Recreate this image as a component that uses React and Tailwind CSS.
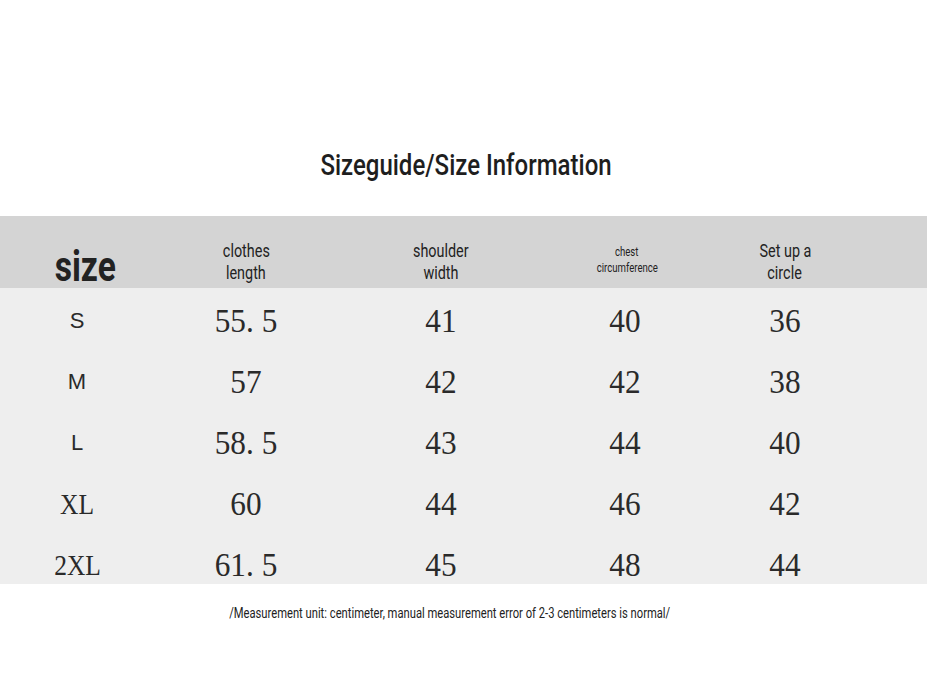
import React from 'react';

const cols = "grid grid-cols-[160px_172px_218px_150px_170px_1fr]";

const rows = [
  { size: 'S', serif: false, vals: ['55. 5', '41', '40', '36'] },
  { size: 'M', serif: false, vals: ['57', '42', '42', '38'] },
  { size: 'L', serif: false, vals: ['58. 5', '43', '44', '40'] },
  { size: 'XL', serif: true, vals: ['60', '44', '46', '42'] },
  { size: '2XL', serif: true, vals: ['61. 5', '45', '48', '44'] },
];

function Head({ lines, small }) {
  return (
    <div className={`flex flex-col items-center text-[#222] ${small ? 'pt-[28px] pl-[4px] text-[12px] leading-[16px]' : 'pt-[24px] text-[18px] leading-[22px]'}`}>
      {lines.map((l) => (
        <span key={l} className="inline-block scale-x-[0.8] whitespace-nowrap">{l}</span>
      ))}
    </div>
  );
}

export default function App() {
  return (
    <div className="h-[696px] w-full bg-white flex flex-col font-['Roboto',sans-serif]">
      {/* Title */}
      <div className="pt-[148px] pl-[6px] h-[216px] text-center">
        <span className="inline-block scale-x-[0.8] text-[30px] leading-[34px] font-medium text-[#1e1e1e] whitespace-nowrap">
          Sizeguide/Size Information
        </span>
      </div>

      {/* Header band */}
      <div className={`${cols} h-[72px] bg-[#d4d4d4]`}>
        <div className="flex justify-center pl-[10px] pt-[31px]">
          <span className="inline-block scale-x-[0.8] text-[42px] leading-[40px] font-bold text-[#222]">size</span>
        </div>
        <Head lines={['clothes', 'length']} />
        <Head lines={['shoulder', 'width']} />
        <Head lines={['chest', 'circumference']} small />
        <Head lines={['Set up a', 'circle']} />
        <div />
      </div>

      {/* Body */}
      <div className="h-[296px] bg-[#eeeeee] flex flex-col pt-[2px]">
        {rows.map((r) => (
          <div key={r.size} className={`${cols} h-[61px] shrink-0 items-center text-[#2a2a2a]`}>
            <div className="flex justify-center pr-[6px]">
              {r.serif ? (
                <span className="inline-block scale-x-[0.85] font-['Liberation_Serif',serif] text-[30px] leading-none">{r.size}</span>
              ) : (
                <span className="font-['Liberation_Sans',sans-serif] text-[22px] leading-none font-light">{r.size}</span>
              )}
            </div>
            {r.vals.map((v, i) => (
              <div key={i} className="flex justify-center font-['Liberation_Serif',serif] text-[34px] leading-none">
                <span className="inline-block scale-x-[0.92]">{v}</span>
              </div>
            ))}
            <div />
          </div>
        ))}
      </div>

      {/* Footer note */}
      <div className="pt-[17px] pr-[28px] text-center">
        <span className="inline-block scale-x-[0.8] text-[14px] leading-[16px] text-[#222] whitespace-nowrap">
          /Measurement unit: centimeter, manual measurement error of 2-3 centimeters is normal/
        </span>
      </div>
    </div>
  );
}
